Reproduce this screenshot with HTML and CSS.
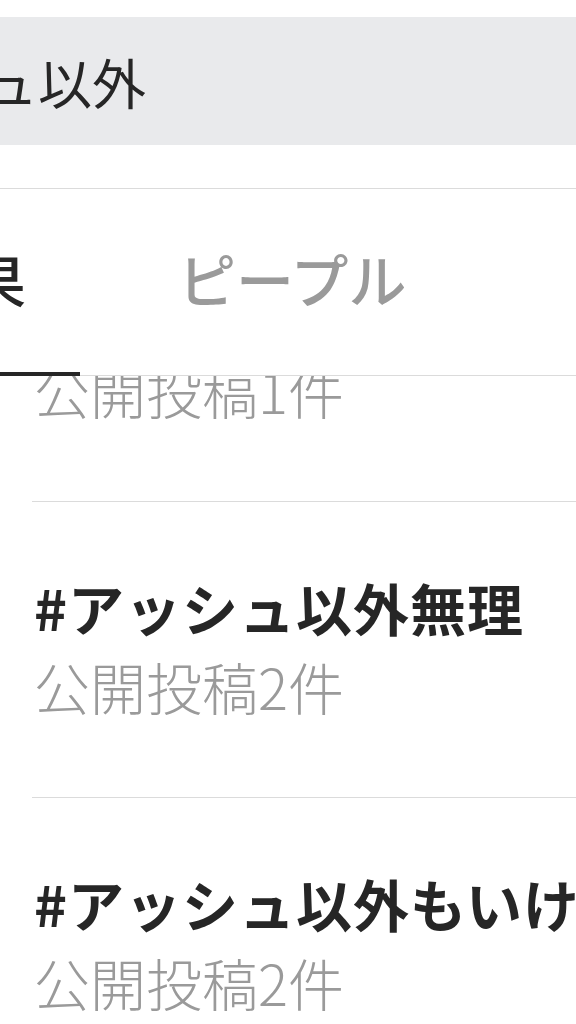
FILE: index.html
```html
<!DOCTYPE html>
<html lang="ja">
<head>
    <meta charset="UTF-8">
    <meta name="viewport" content="width=device-width, initial-scale=1.0">
    <title>検索</title>
    <link rel="stylesheet" href="styles.css">
</head>
<body>

    <header class="header">
        <div class="search">
            <div class="search-bar">
                <span class="search-query">アッシュ以外</span>
            </div>
        </div>
        <nav class="tabs">
            <div class="tab tab-active">上位検索結果</div>
            <div class="tab">ピープル</div>
        </nav>
    </header>

    <main class="results">
        <ul class="result-list">
            <li class="result">
                <div class="result-title">#アッシュ以外</div>
                <div class="result-count">公開投稿1件</div>
            </li>
            <li class="result">
                <div class="result-title">#アッシュ以外無理</div>
                <div class="result-count">公開投稿2件</div>
            </li>
            <li class="result">
                <div class="result-title">#アッシュ以外もいける</div>
                <div class="result-count">公開投稿2件</div>
            </li>
        </ul>
    </main>

</body>
</html>
```

FILE: styles.css
```css
body {
    margin: 0;
    width: 576px;
    height: 1024px;
    overflow: hidden;
    background-color: #fff;
    font-family: "Noto Sans CJK JP", sans-serif;
    color: #262626;
}

/* barre de recherche */
.search {
    padding: 17px 0 43px;
    border-bottom: 1px solid #dbdbdb;
}

.search-bar {
    height: 128px;
    display: flex;
    align-items: center;
    background-color: #e9eaec;
    overflow: hidden;
}

.search-query {
    margin-left: -178px;
    font-size: 54px;
    font-weight: 400;
    white-space: nowrap;
}

/* onglets */
.tabs {
    height: 186px;
    display: flex;
    border-bottom: 1px solid #dbdbdb;
}

.tab {
    display: flex;
    align-items: center;
    padding: 0 0 8px 98px;
    font-size: 58px;
    font-weight: 500;
    color: #9a9a9a;
    white-space: nowrap;
}

.tab-active {
    flex-shrink: 0;
    margin-left: -378px;
    margin-bottom: -1px;
    padding: 0 54px 4px 56px;
    border-bottom: 4px solid #262626;
    color: #262626;
}

/* résultats */
.results {
    height: 647px;
    overflow: hidden;
}

.result-list {
    list-style: none;
    margin: -171px 0 0;
    padding: 0;
}

.result {
    box-sizing: border-box;
    height: 296px;
    margin-left: 32px;
    padding: 0 0 8px 2px;
    display: flex;
    flex-direction: column;
    justify-content: center;
    border-top: 1px solid #dbdbdb;
    white-space: nowrap;
}

.result-title {
    font-size: 56px;
    font-weight: 700;
    line-height: 80px;
    letter-spacing: 1px;
}

.result-count {
    font-size: 56px;
    font-weight: 300;
    line-height: 77px;
    color: #9a9a9a;
}
```
